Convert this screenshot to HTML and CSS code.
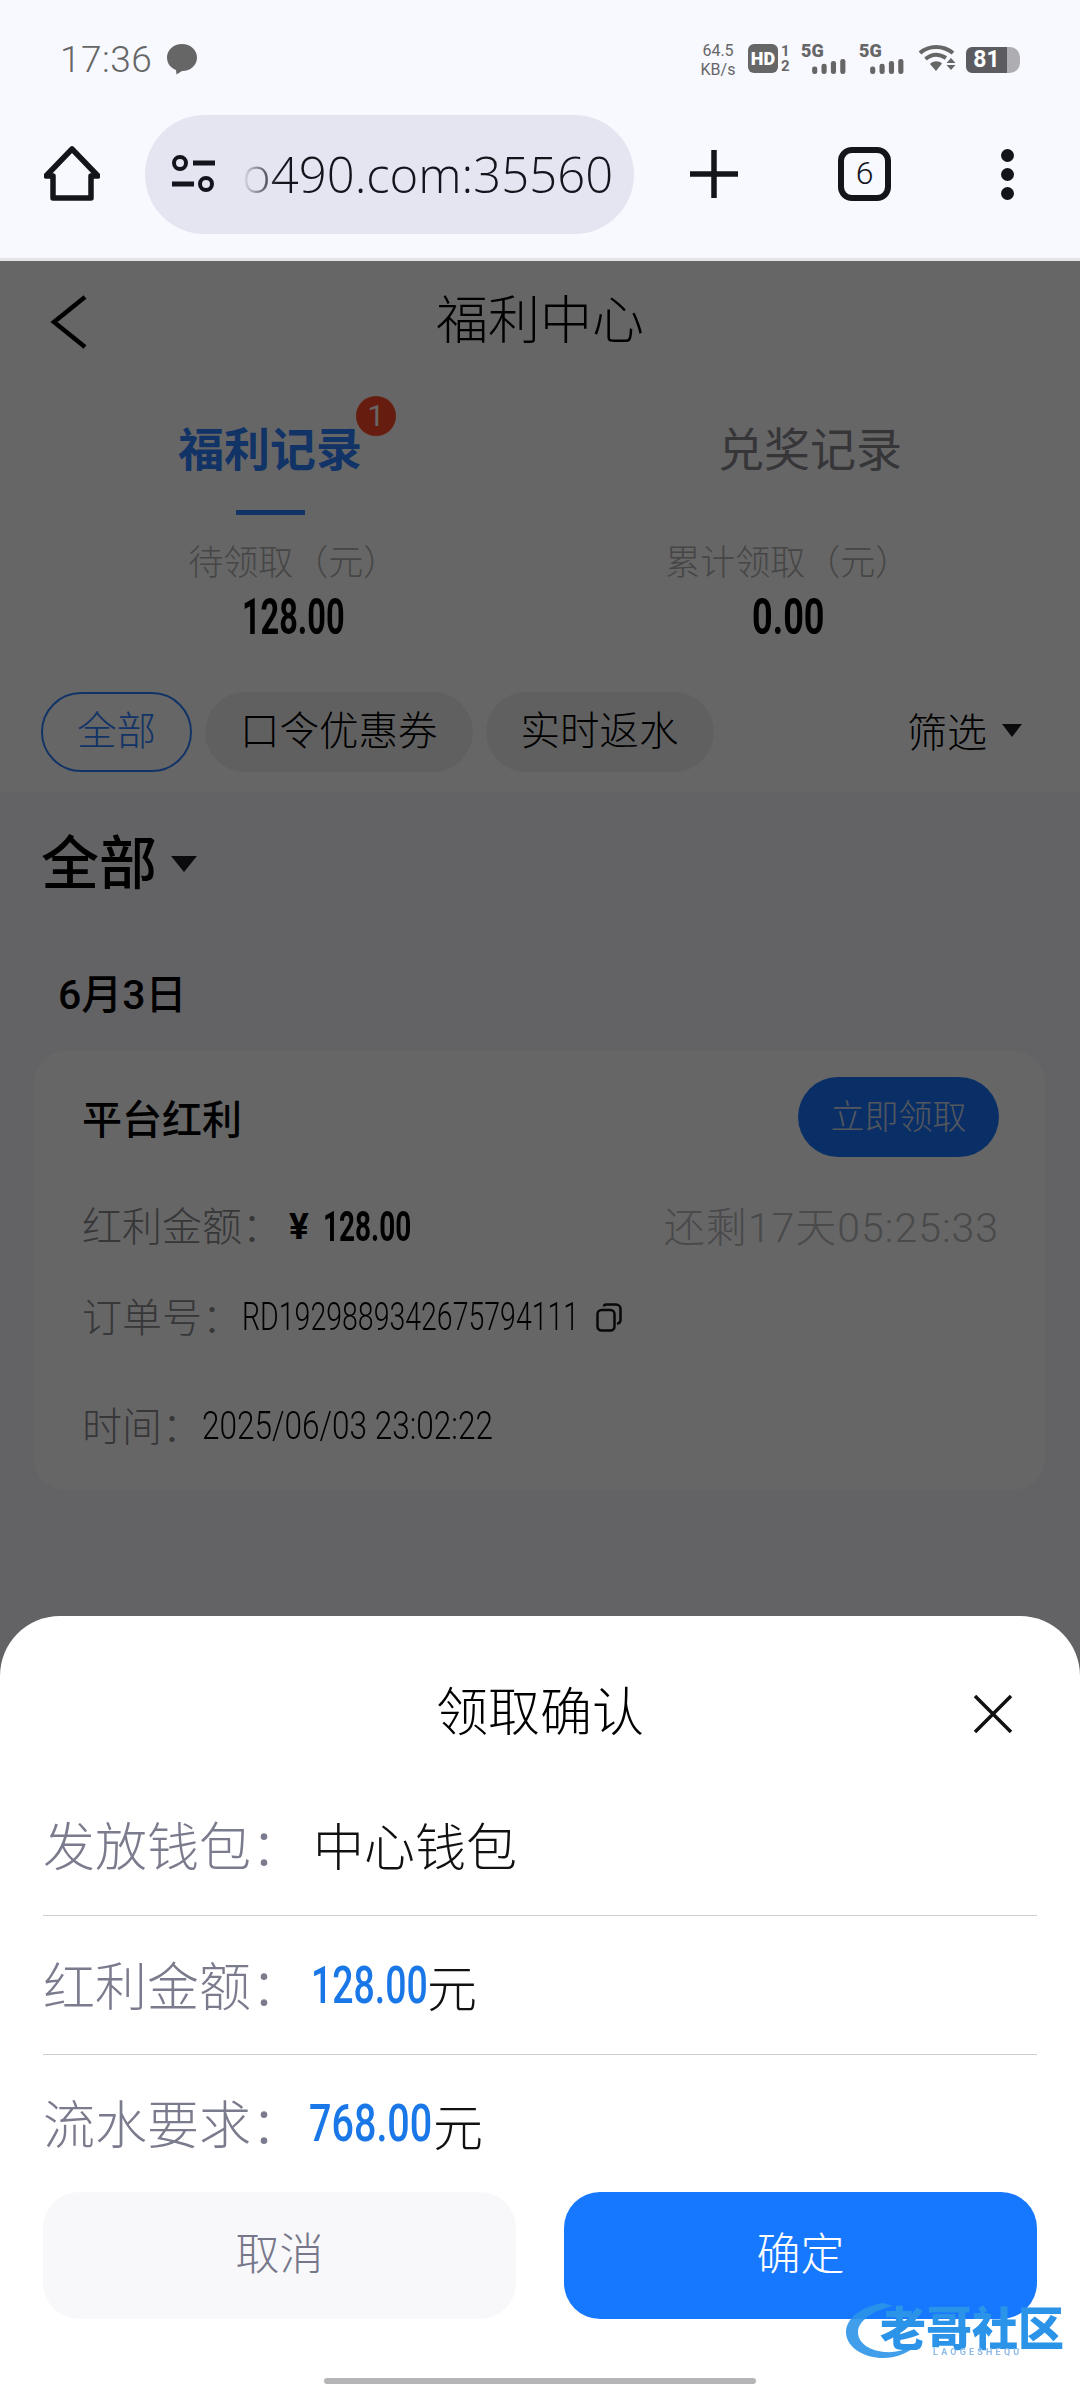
FILE: index.html
```html
<!DOCTYPE html>
<html>
<head>
<meta charset="utf-8">
<title>福利中心</title>
<link rel="stylesheet" href="styles.css">
</head>
<body>
<div class="screen">

  <!-- browser chrome -->
  <div class="chrome">
    <div class="status">
      <span class="clock">17:36</span>
      <svg class="bubble" width="32" height="32" viewBox="0 0 32 32"><path d="M16 1C7.500 1 1 7 1 14.500C1 21 5.500 25.500 10 27L10.500 31.500L16 28C25 28 31 22 31 14.500C31 7 24.500 1 16 1Z" fill="#666"/></svg>
      <div class="status-right">
        <div class="speed"><span>64.5</span><span>KB/s</span></div>
        <span class="hd">HD</span>
        <div class="sim-num"><span>1</span><span>2</span></div>
        <div class="signal">
          <span class="five-g">5G</span>
          <svg width="36" height="16" viewBox="0 0 36 16"><g fill="#666"><rect x="0" y="8" width="5.500" height="8" rx="2.500"/><rect x="10" y="5" width="5.500" height="11" rx="2.500"/><rect x="20" y="2" width="5.500" height="14" rx="2.500"/><rect x="30" y="0" width="5.500" height="16" rx="2.500"/></g></svg>
        </div>
        <div class="signal">
          <span class="five-g">5G</span>
          <svg width="36" height="16" viewBox="0 0 36 16"><g fill="#666"><rect x="0" y="8" width="5.500" height="8" rx="2.500"/><rect x="10" y="5" width="5.500" height="11" rx="2.500"/><rect x="20" y="2" width="5.500" height="14" rx="2.500"/><rect x="30" y="0" width="5.500" height="16" rx="2.500"/></g></svg>
        </div>
        <svg class="wifi" width="38" height="28" viewBox="0 0 38 28">
          <g fill="none" stroke="#666" stroke-width="4">
            <path d="M2 9C11 1 25 1 35 9"/>
            <path d="M7.500 15C14 9.500 21 9.500 28 14"/>
          </g>
          <path d="M12 20C15 16.500 21 16.500 24 19.500L18 27Z" fill="#666"/>
          <path d="M33 14L37.500 19H28.500ZM28.500 21H37.500L33 26Z" fill="#666"/>
        </svg>
        <div class="battery"><span class="battery-num">81</span></div>
      </div>
    </div>
    <div class="toolbar">
      <svg class="home-icon" width="56" height="56" viewBox="0 0 56 56"><path d="M28 3L2 30H9V52H47V30H54Z" fill="none" stroke="#14141c" stroke-width="5.500" stroke-linejoin="round"/></svg>
      <div class="url-pill">
        <svg width="46" height="40" viewBox="0 0 46 40">
          <g fill="none" stroke="#14141c" stroke-width="4"><circle cx="9" cy="9" r="6"/><circle cx="35" cy="30" r="6"/></g>
          <g stroke="#14141c" stroke-width="5"><path d="M22 9H44"/><path d="M1 30H23"/></g>
        </svg>
        <span class="url">o490.com:35560</span>
      </div>
      <svg class="plus-icon" width="48" height="48" viewBox="0 0 48 48"><path d="M24 1V47M1 24H47" stroke="#14141c" stroke-width="5.500" stroke-linecap="round"/></svg>
      <div class="tab-count">6</div>
      <div class="dots"><i></i><i></i><i></i></div>
    </div>
  </div>

  <div class="main">
    <div class="head-block">
      <div class="nav">
        <svg class="back" width="38" height="54" viewBox="0 0 38 54"><path d="M35 2L4 27L35 52" fill="none" stroke="#000" stroke-width="4.500"/></svg>
        <div class="nav-title">福利中心</div>
      </div>
      <div class="tabs">
        <div class="tab tab-on">
          <span class="tab-text">福利记录<span class="badge">1</span></span>
          <i class="tab-line"></i>
        </div>
        <div class="tab"><span class="tab-text">兑奖记录</span></div>
      </div>
      <div class="stats">
        <div class="stat"><div class="stat-label">待领取（元）</div><div class="stat-value">128.00</div></div>
        <div class="stat"><div class="stat-label">累计领取（元）</div><div class="stat-value">0.00</div></div>
      </div>
      <div class="filters">
        <span class="chip chip-on">全部</span>
        <span class="chip">口令优惠券</span>
        <span class="chip">实时返水</span>
        <span class="filter-btn"><span class="filter-text">筛选</span><i class="tri"></i></span>
      </div>
    </div>

    <div class="list">
      <div class="list-title">全部<i class="tri tri-big"></i></div>
      <div class="date">6月3日</div>
      <div class="card">
        <div class="card-head">
          <span class="card-name">平台红利</span>
          <span class="claim">立即领取</span>
        </div>
        <div class="card-row row-amount">
          <span class="key">红利金额：</span>
          <span class="yen">¥</span><span class="squeeze amount">128.00</span>
          <span class="left-time">还剩17天05:25:33</span>
        </div>
        <div class="card-row row-order">
          <span class="key">订单号：</span>
          <span class="squeeze order-no">RD1929889342675794111</span>
          <svg width="26" height="29" viewBox="0 0 26 29"><g fill="none" stroke="#16161a" stroke-width="2.500"><rect x="1.500" y="7" width="17" height="20.500" rx="4"/><path d="M8 3.500C8 2 9 1.500 10.500 1.500H20C22.500 1.500 24.500 3.500 24.500 6V17C24.500 19 23.500 20.500 21 20.500"/></g></svg>
        </div>
        <div class="card-row row-time">
          <span class="key">时间：</span>
          <span class="squeeze time-val">2025/06/03 23:02:22</span>
        </div>
      </div>
    </div>

    <div class="dim"></div>
  </div>

  <!-- bottom sheet -->
  <div class="sheet">
    <div class="sheet-head">
      <span></span>
      <div class="sheet-title">领取确认</div>
      <svg class="close" width="40" height="40" viewBox="0 0 40 40"><path d="M2 2L38 38M38 2L2 38" stroke="#111" stroke-width="3.500"/></svg>
    </div>
    <div class="sheet-row">
      <span class="sheet-key">发放钱包：</span><span class="sheet-val wallet">中心钱包</span>
    </div>
    <div class="sheet-row">
      <span class="sheet-key">红利金额：</span><span class="squeeze sum sum-a">128.00</span><span class="sheet-val">元</span>
    </div>
    <div class="sheet-row">
      <span class="sheet-key">流水要求：</span><span class="squeeze sum sum-b">768.00</span><span class="sheet-val">元</span>
    </div>
    <div class="sheet-btns">
      <div class="btn btn-cancel">取消</div>
      <div class="btn btn-ok">确定</div>
    </div>
    <div class="home-bar"></div>
  </div>

  <!-- watermark -->
  <div class="mark">
    <svg class="mark-arc" width="100" height="64" viewBox="0 0 100 64">
      <path d="M40 3C16 7 3 20 3 32C3 48 22 58 40 58C55 58 66 52 76 44C66 49 52 53 42 52C28 51 15 44 15 32C15 22 28 11 50 6" fill="#2b93e8" fill-opacity=".9"/>
    </svg>
    <span class="mark-cn">老哥社区</span>
    <span class="mark-en">LAOGESHEQU</span>
  </div>
</div>
</body>
</html>
```

FILE: styles.css
```css
* {
    box-sizing: border-box;
}

html, body {
    margin: 0;
    padding: 0;
}

body {
    font-family: Roboto, "Noto Sans CJK SC", sans-serif;
    color: #000;
}

i {
    display: block;
}

.screen {
    position: relative;
    width: 1080px;
    height: 2388px;
    overflow: hidden;
    display: flex;
    flex-direction: column;
    background: #f8f8fd;
}

/* ---- browser chrome ---- */
.chrome {
    height: 261px;
    background: #f8f8ff;
    border-bottom: 3px solid #e3e3e8;
}

.status {
    height: 114px;
    padding: 4px 60px 0;
    display: flex;
    align-items: center;
    color: #666;
}

.clock {
    font-size: 37px;
    font-weight: 300;
    letter-spacing: .5px;
    width: 106px;
}

.status-right {
    margin-left: auto;
    display: flex;
    align-items: flex-start;
    height: 30px;
}

.speed {
    width: 36px;
    margin-top: -3px;
    font-size: 16px;
    line-height: 19px;
    display: flex;
    flex-direction: column;
    align-items: center;
    white-space: nowrap;
}

.hd {
    width: 30px;
    height: 29px;
    margin-left: 12px;
    background: #666;
    border-radius: 6px;
    color: #fff;
    font-size: 18px;
    font-weight: 900;
    line-height: 29px;
    text-align: center;
}

.sim-num {
    width: 12px;
    margin-left: 3px;
    font-size: 15px;
    font-weight: 700;
    line-height: 15px;
    display: flex;
    flex-direction: column;
}

.signal {
    width: 36px;
    height: 30px;
    margin-left: 18px;
    display: flex;
    flex-direction: column;
}

.signal + .signal {
    margin-left: 22px;
}

.five-g {
    font-size: 18px;
    font-weight: 900;
    line-height: 14px;
    margin-left: -10px;
}

.signal svg {
    margin-top: 1px;
    display: block;
}

.wifi {
    margin-left: 13px;
}

.battery {
    width: 54px;
    height: 26px;
    margin-left: 10px;
    margin-top: 3px;
    border-radius: 6px 10px 10px 6px;
    background: linear-gradient(90deg, #5c5c60 76%, #aeaeb2 76%);
}

.battery-num {
    display: block;
    width: 41px;
    color: #fff;
    font-size: 23px;
    font-weight: 700;
    line-height: 26px;
    text-align: center;
}

.toolbar {
    height: 120px;
    padding-left: 44px;
    display: flex;
    align-items: center;
}

.home-icon {
    flex: none;
}

.url-pill {
    width: 489px;
    height: 119px;
    margin-left: 45px;
    padding-left: 26px;
    background: #e4e5f0;
    border-radius: 60px;
    display: flex;
    align-items: center;
    overflow: hidden;
}

.url {
    margin-left: 25px;
    font-size: 49px;
    font-family: "Open Sans", Roboto, sans-serif;
    font-weight: 300;
    color: #14141c;
    white-space: nowrap;
    -webkit-mask-image: linear-gradient(90deg, transparent 0, #000 36px);
    mask-image: linear-gradient(90deg, transparent 0, #000 36px);
}

.plus-icon {
    margin-left: 56px;
    flex: none;
}

.tab-count {
    width: 53px;
    height: 54px;
    margin-left: 100px;
    border: 6px solid #14141c;
    border-radius: 14px;
    font-size: 32px;
    font-weight: 300;
    line-height: 41px;
    text-align: center;
    color: #14141c;
}

.dots {
    margin-left: 110px;
    display: flex;
    flex-direction: column;
    gap: 6px;
}

.dots i {
    width: 13px;
    height: 13px;
    border-radius: 50%;
    background: #14141c;
}

/* ---- page under the dim layer ---- */
.main {
    position: relative;
    flex: 1;
}

.dim {
    position: absolute;
    left: 0;
    right: 0;
    top: 0;
    bottom: 0;
    background: rgba(0, 0, 0, .6);
}

.head-block {
    height: 531px;
    background: #fff;
}

.nav {
    height: 122px;
    padding: 0 50px;
    display: grid;
    grid-template-columns: 1fr auto 1fr;
    align-items: center;
}

.nav-title {
    font-size: 52px;
    font-weight: 300;
    line-height: 60px;
}

.tabs {
    display: grid;
    grid-template-columns: 1fr 1fr;
    height: 132px;
}

.tab {
    padding-top: 41px;
    display: flex;
    flex-direction: column;
    align-items: center;
}

.tab-text {
    position: relative;
    font-size: 46px;
    line-height: 52px;
    color: #888890;
}

.tab-on .tab-text {
    color: #2f7fff;
    font-weight: 700;
}

.tab-line {
    width: 69px;
    height: 5px;
    margin-top: 34px;
    background: #2f7fff;
}

.badge {
    position: absolute;
    left: 178px;
    top: -28px;
    width: 40px;
    height: 40px;
    border-radius: 50%;
    background: #ff4a2a;
    color: #fff;
    font-size: 30px;
    font-weight: 400;
    line-height: 40px;
    text-align: center;
}

.stats {
    display: grid;
    grid-template-columns: 1fr 1fr;
    padding: 27px 45px 0 46px;
}

.stat {
    text-align: center;
}

.stat-label {
    font-size: 35px;
    font-weight: 300;
    line-height: 44px;
    color: #b0b0b0;
}

.stat-value {
    margin-top: 5px;
    font-size: 50px;
    font-weight: 700;
    line-height: 52px;
    transform: scaleX(.65);
}

.stat + .stat .stat-value {
    transform: scaleX(.72);
}

.filters {
    padding: 49px 58px 0 41px;
    display: flex;
    align-items: center;
}

.chip {
    height: 80px;
    padding: 0 35px;
    margin-right: 13px;
    border-radius: 40px;
    background: #f0f0f0;
    font-size: 39.500px;
    font-weight: 300;
    line-height: 80px;
    white-space: nowrap;
}

.chip-on {
    padding: 0 34px;
    background: #fff;
    border: 2px solid #2f7fff;
    color: #2f7fff;
    line-height: 76px;
}

.filter-btn {
    margin-left: auto;
    display: flex;
    align-items: center;
    font-size: 40px;
    font-weight: 300;
}

.filter-text {
    margin-top: -4px;
}

.tri {
    width: 0;
    height: 0;
    margin-left: 15px;
    border-left: 10px solid transparent;
    border-right: 10px solid transparent;
    border-top: 13px solid #1c1c22;
    margin-top: -4px;
}

.list {
    padding-top: 37px;
}

.list-title {
    height: 70px;
    padding-left: 41px;
    display: flex;
    align-items: center;
    font-size: 58px;
    font-weight: 500;
    line-height: 70px;
}

.tri-big {
    margin-left: 14px;
    border-left-width: 13px;
    border-right-width: 13px;
    border-top-width: 16px;
    margin-top: 0;
    border-top-color: #1c1c22;
}

.date {
    margin-top: 71px;
    padding-left: 58px;
    font-size: 41px;
    font-weight: 500;
    line-height: 50px;
}

.card {
    width: 1011px;
    height: 439px;
    margin: 31px 0 0 34px;
    padding: 26px 46px 0 48px;
    background: #fff;
    border-radius: 32px;
}

.card-head {
    height: 80px;
    display: flex;
    align-items: center;
    justify-content: space-between;
}

.card-name {
    font-size: 40px;
    font-weight: 500;
}

.claim {
    width: 201px;
    height: 80px;
    border-radius: 40px;
    background: #1a77ff;
    color: #cfd8e8;
    font-size: 34px;
    font-weight: 300;
    line-height: 80px;
    text-align: center;
}

.card-row {
    height: 50px;
    display: flex;
    align-items: center;
}

.row-amount {
    margin-top: 44px;
}

.row-order {
    margin-top: 41px;
}

.row-time {
    margin-top: 59px;
}

.key {
    margin-top: -4px;
    font-size: 40px;
    font-weight: 300;
    color: #8a8a8e;
    white-space: nowrap;
}

.squeeze {
    display: inline-block;
    transform-origin: left center;
    white-space: nowrap;
}

.yen {
    margin-left: 7px;
    font-size: 37px;
    font-weight: 700;
    width: 34px;
}

.amount {
    font-size: 42px;
    font-weight: 700;
    transform: scaleX(.665);
}

.left-time {
    margin-left: auto;
    margin-top: -4px;
    font-size: 41px;
    font-weight: 300;
    letter-spacing: 1px;
    color: #b8b8bc;
    white-space: nowrap;
}

.order-no {
    width: 354px;
    font-size: 38px;
    font-weight: 300;
    transform: scaleX(.75);
}

.time-val {
    font-size: 38px;
    font-weight: 300;
    transform: scaleX(.83);
}

/* ---- bottom sheet ---- */
.sheet {
    position: absolute;
    left: 0;
    right: 0;
    bottom: 0;
    height: 772px;
    padding: 58px 43px 0;
    background: #fff;
    border-radius: 60px 60px 0 0;
}

.sheet-head {
    height: 80px;
    padding-right: 24px;
    margin-bottom: 22px;
    display: grid;
    grid-template-columns: 1fr auto 1fr;
    align-items: center;
    justify-items: end;
}

.sheet-title {
    font-size: 52px;
    font-weight: 300;
    line-height: 60px;
    position: relative;
    left: 12px;
}

.sheet-row {
    height: 140px;
    display: flex;
    align-items: center;
    border-bottom: 1px solid #cfcfd2;
}

.sheet-row + .sheet-row {
    height: 139px;
}

.sheet-row + .sheet-row + .sheet-row {
    height: 137px;
    border-bottom: 0;
}

.sheet-key {
    width: 268px;
    margin-top: -4px;
    font-size: 52px;
    font-weight: 300;
    color: #7b7b8e;
    white-space: nowrap;
}

.sheet-val {
    font-size: 50px;
    font-weight: 300;
    color: #111;
}

.wallet {
    margin-left: 2px;
    margin-top: -4px;
    font-size: 51px;
}

.sum {
    font-size: 52px;
    font-weight: 500;
    color: #1a77e8;
    transform: scaleX(.72);
}

.sum-a {
    width: 116px;
}

.sum-b {
    width: 124px;
    margin-left: -2px;
    transform: scaleX(.76);
}

.sheet-btns {
    display: grid;
    grid-template-columns: 473px 473px;
    gap: 48px;
}

.btn {
    height: 127px;
    border-radius: 36px;
    font-size: 44px;
    font-weight: 300;
    line-height: 127px;
    text-align: center;
}

.btn-cancel {
    background: #f8f8fb;
    color: #77778a;
}

.btn-ok {
    background: #1677ff;
    color: #fff;
}

.home-bar {
    width: 432px;
    height: 6px;
    margin: 59px auto 0;
    background: #b5b5b8;
    border-radius: 3px;
}

/* watermark sits over the sheet */
.mark {
    position: absolute;
    left: 843px;
    top: 2300px;
    width: 225px;
    height: 64px;
    filter: blur(.6px);
}

.mark-arc {
    position: absolute;
    left: 0;
    top: 0;
}

.mark-cn {
    position: absolute;
    left: 37px;
    top: 12px;
    font-size: 46px;
    font-weight: 900;
    line-height: 34px;
    color: #2b93e8;
    white-space: nowrap;
}

.mark-en {
    position: absolute;
    left: 90px;
    top: 47px;
    font-size: 9px;
    font-weight: 700;
    letter-spacing: 3.200px;
    line-height: 10px;
    color: #8fbce8;
    white-space: nowrap;
}
```
